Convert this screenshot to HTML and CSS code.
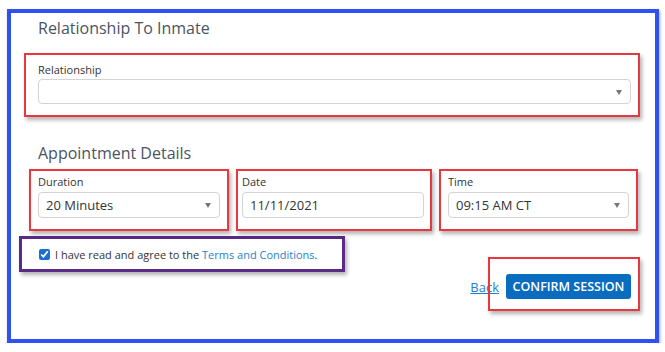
FILE: index.html
```html
<!DOCTYPE html>
<html lang="en">
<head>
  <meta charset="UTF-8">
  <title>Confirm Session</title>
  <link rel="stylesheet" href="styles.css">
</head>
<body>
  <div class="frame">
    <h2 class="section-title">Relationship To Inmate</h2>

    <div class="mark mark-relationship">
      <label class="field-label">Relationship</label>
      <div class="select"><span class="select-value"></span><span class="caret"></span></div>
    </div>

    <h2 class="section-title appt-title">Appointment Details</h2>

    <div class="appt-row">
      <div class="mark mark-duration">
        <label class="field-label">Duration</label>
        <div class="select"><span class="select-value">20 Minutes</span><span class="caret"></span></div>
      </div>
      <div class="mark mark-date">
        <label class="field-label">Date</label>
        <div class="select text-input"><span class="select-value">11/11/2021</span></div>
      </div>
      <div class="mark mark-time">
        <label class="field-label">Time</label>
        <div class="select"><span class="select-value">09:15 AM CT</span><span class="caret"></span></div>
      </div>
    </div>

    <div class="terms">
      <input type="checkbox" class="terms-check" checked>
      <span>I have read and agree to the <a href="#" class="link">Terms and Conditions</a>.</span>
    </div>

    <div class="actions">
      <a href="#" class="back-link">Back</a>
      <div class="confirm-wrap">
        <button class="confirm-btn">CONFIRM SESSION</button>
      </div>
    </div>
  </div>
</body>
</html>
```

FILE: styles.css
```css
:root {
  --frame: #2f51f0;
  --mark: #e8383f;
  --purple: #5a2a86;
  --title: #4a5464;
  --text: #333;
  --border: #d3d3d3;
  --primary: #0a6cbf;
  --link: #1f7fcd;
}

* {
  margin: 0;
  padding: 0;
  box-sizing: border-box;
}

body {
  font-family: 'Open Sans', 'Noto Sans', sans-serif;
  background: #fff;
  color: var(--text);
}

.frame {
  margin: 9px 6px 0 7px;
  height: 334px;
  border: 4px solid var(--frame);
  padding-top: 4px;
  box-shadow: 1px 2px 3px rgba(0, 0, 0, 0.35);
}

.section-title {
  font-size: 16px;
  line-height: 23px;
  font-weight: 400;
  color: var(--title);
  padding-left: 27px;
}

.mark {
  border: 2px solid var(--mark);
  box-shadow: 2px 3px 4px rgba(0, 0, 0, 0.3);
}

.mark-relationship {
  margin: 13px 15px 0 13px;
  padding: 7px 7px 11px 12px;
}

.field-label {
  display: block;
  font-size: 11px;
  line-height: 16px;
  color: var(--text);
}

.mark-relationship .field-label {
  margin-bottom: 1px;
}

.select {
  position: relative;
  height: 25px;
  border: 1px solid var(--border);
  border-radius: 4px;
  background: #fff;
  display: flex;
  align-items: center;
  padding: 0 24px 0 7px;
}

.select-value {
  font-size: 13px;
  color: var(--text);
}

.caret {
  position: absolute;
  right: 8px;
  top: 10px;
  width: 0;
  height: 0;
  border-left: 3.5px solid transparent;
  border-right: 3.5px solid transparent;
  border-top: 5px solid #777;
}

.appt-title {
  margin-top: 25px;
}

.appt-row {
  display: grid;
  grid-template-columns: 200px 196px 199px;
  column-gap: 7px;
  margin: 4px 0 0 18px;
}

.appt-row .mark {
  padding: 3px 7px 11px 7px;
}

.appt-row .field-label {
  margin-bottom: 2px;
}

.appt-row .select {
  height: 26px;
}

.appt-row .mark-date {
  padding-left: 4px;
  padding-right: 6px;
}

.terms {
  width: 326px;
  height: 36px;
  margin: 5px 0 0 8px;
  border: 3px solid var(--purple);
  box-shadow: 2px 3px 4px rgba(0, 0, 0, 0.3);
  display: flex;
  align-items: center;
  gap: 5px;
  padding-left: 17px;
  font-size: 11px;
  color: var(--text);
}

.terms-check {
  width: 11px;
  height: 11px;
  accent-color: #1a6fd6;
}

.link {
  color: var(--link);
  text-decoration: none;
}

.actions {
  display: flex;
  justify-content: flex-end;
  align-items: center;
  gap: 7px;
  margin-top: 2px;
  padding-right: 24px;
}

.back-link {
  font-size: 13px;
  color: var(--link);
  text-decoration: underline;
}

.confirm-wrap {
  position: relative;
}

/* annotation outline around the button */
.confirm-wrap::before {
  content: '';
  position: absolute;
  left: -18px;
  right: -9px;
  top: -17px;
  bottom: -12px;
  border: 2px solid var(--mark);
  box-shadow: 2px 3px 4px rgba(0, 0, 0, 0.3);
  pointer-events: none;
}

.confirm-btn {
  display: block;
  width: 125px;
  height: 25px;
  background: var(--primary);
  color: #fff;
  border: none;
  border-radius: 3px;
  font-family: inherit;
  font-size: 12.5px;
  font-weight: 600;
}
```
